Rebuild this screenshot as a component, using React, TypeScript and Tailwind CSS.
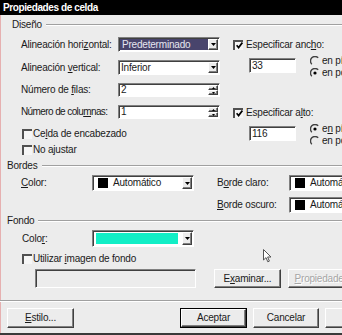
import React from "react";

const sunkenCls =
  "border border-t-[#808080] border-l-[#808080] border-b-[#ffffff] border-r-[#ffffff] shadow-[inset_1px_1px_0_0_#404040]";
const raisedCls =
  "border border-t-[#ffffff] border-l-[#ffffff] border-b-[#404040] border-r-[#404040] shadow-[inset_-1px_-1px_0_0_#808080]";

function U({ children }: { children: React.ReactNode }) {
  return <span className="underline decoration-1 underline-offset-[1px]">{children}</span>;
}

function Field({ className, children }: { className: string; children?: React.ReactNode }) {
  return <div className={`flex shrink-0 items-stretch p-[1px] ${sunkenCls} ${className}`}>{children}</div>;
}

function DropBtn() {
  return (
    <div className={`w-[10px] shrink-0 bg-[#ececec] ${raisedCls} flex items-center justify-center`}>
      <svg width="5" height="3" viewBox="0 0 5 3">
        <path d="M0 0H5L2.5 3Z" fill="#000" />
      </svg>
    </div>
  );
}

function SpinBtns() {
  return (
    <div className="w-[10px] shrink-0 flex flex-col">
      <div className={`flex-1 bg-[#ececec] ${raisedCls} flex items-center justify-center`}>
        <svg width="3" height="2" viewBox="0 0 3 2">
          <path d="M0 2H3L1.5 0Z" fill="#000" />
        </svg>
      </div>
      <div className={`flex-1 bg-[#ececec] ${raisedCls} flex items-center justify-center`}>
        <svg width="3" height="2" viewBox="0 0 3 2">
          <path d="M0 0H3L1.5 2Z" fill="#000" />
        </svg>
      </div>
    </div>
  );
}

function Check({ on }: { on?: boolean }) {
  return (
    <div className="w-[10px] h-[10px] shrink-0 border-t-2 border-l-2 border-t-[#505050] border-l-[#505050] bg-[#f6f6f6] flex items-center justify-center">
      {on && (
        <svg width="7" height="7" viewBox="0 0 7 7">
          <path d="M0.6 3.2L2.6 5.6L6.4 0.6" stroke="#000" strokeWidth="1.7" fill="none" />
        </svg>
      )}
    </div>
  );
}

function Radio({ on }: { on?: boolean }) {
  return (
    <svg width="10" height="10" viewBox="0 0 10 10" className="shrink-0">
      <path d="M8.2 1.8A4.5 4.5 0 0 0 1.8 8.2" stroke="#404040" strokeWidth="1.4" fill="none" />
      {on && <circle cx="5" cy="5" r="1.6" fill="#000" />}
    </svg>
  );
}

function GroupHeader({ label, className }: { label: string; className: string }) {
  return (
    <div className={`h-[12px] shrink-0 flex items-center whitespace-nowrap ${className}`}>
      <span className="shrink-0">{label}</span>
      <div className="flex-1 ml-[4px] h-[2px] border-t border-t-[#a0a0a0] border-b border-b-white" />
    </div>
  );
}

function Btn({
  className,
  children,
  def,
  disabled,
}: {
  className: string;
  children?: React.ReactNode;
  def?: boolean;
  disabled?: boolean;
}) {
  const inner = (
    <div
      className={`flex-1 bg-[#ececec] ${raisedCls} flex items-center justify-center whitespace-nowrap ${
        disabled ? "text-[#a6a6a6] [text-shadow:1px_1px_0_#ffffff]" : ""
      }`}
    >
      {children}
    </div>
  );
  if (def) {
    return <div className={`shrink-0 flex border border-black ${className}`}>{inner}</div>;
  }
  return <div className={`shrink-0 flex ${className}`}>{inner}</div>;
}

function ColorSelect({ className }: { className: string }) {
  return (
    <Field className={`bg-white ${className}`}>
      <div className="flex-1 flex items-center overflow-hidden whitespace-nowrap">
        <div className="w-[10px] h-[10px] bg-black ml-[4px] shrink-0" />
        <span className="ml-[5px] shrink-0">Automático</span>
      </div>
      <DropBtn />
    </Field>
  );
}

function Label({ className, children }: { className: string; children: React.ReactNode }) {
  return <span className={`shrink-0 whitespace-nowrap ${className}`}>{children}</span>;
}

function RadioRow({ on, children }: { on?: boolean; children: React.ReactNode }) {
  return (
    <div className="h-[12px] flex items-center gap-[2px] whitespace-nowrap">
      <Radio on={on} />
      <span className="shrink-0">{children}</span>
    </div>
  );
}

export default function App() {
  return (
    <div className="relative w-[342px] h-[335px] overflow-hidden bg-[#ececec] text-[10px] tracking-[-0.2px] leading-none text-[#1a1a1a] font-['Liberation_Sans',Arial,sans-serif] flex flex-col">
      <div className="h-[15px] shrink-0 bg-black text-white font-bold text-[10px] tracking-[-0.4px] pl-[3px] flex items-center whitespace-nowrap">
        Propiedades de celda
      </div>

      <div className="flex-1 flex flex-col shadow-[inset_1px_0_0_0_#e6b0b0]">
        {/* Diseño */}
        <GroupHeader label="Diseño" className="mt-[4px] pl-[12px]" />
        <div className="flex h-[125px] shrink-0">
          <div className="w-[232px] shrink-0 pl-[21px] flex flex-col">
            <div className="mt-[6px] h-[15px] flex items-center">
              <Label className="w-[97px]">
                Alineación hori<U>z</U>ontal:
              </Label>
              <Field className="w-[102px] h-[15px] bg-white">
                <div className="flex-1 bg-[#48446c] text-[#e6e6f0] flex items-center pl-[2px] whitespace-nowrap">
                  Predeterminado
                </div>
                <DropBtn />
              </Field>
            </div>
            <div className="mt-[8px] h-[15px] flex items-center">
              <Label className="w-[97px]">
                Alineación <U>v</U>ertical:
              </Label>
              <Field className="w-[102px] h-[15px] bg-white">
                <div className="flex-1 flex items-center pl-[1px] whitespace-nowrap">Inferior</div>
                <DropBtn />
              </Field>
            </div>
            <div className="mt-[8px] h-[14px] flex items-center">
              <Label className="w-[97px]">
                Número de <U>f</U>ilas:
              </Label>
              <Field className="w-[102px] h-[14px] bg-white">
                <div className="flex-1 flex items-center pl-[1px]">2</div>
                <SpinBtns />
              </Field>
            </div>
            <div className="mt-[8px] h-[14px] flex items-center">
              <Label className="w-[97px] tracking-[-0.6px]">
                Número de colu<U>m</U>nas:
              </Label>
              <Field className="w-[102px] h-[14px] bg-white">
                <div className="flex-1 flex items-center pl-[1px]">1</div>
                <SpinBtns />
              </Field>
            </div>
            <div className="mt-[8px] h-[13px] flex items-center gap-[1px] pl-[1px]">
              <Check />
              <Label className="">
                Ce<U>l</U>da de encabezado
              </Label>
            </div>
            <div className="mt-[3px] h-[13px] flex items-center gap-[1px] pl-[1px]">
              <Check />
              <Label className="">
                No a<U>j</U>ustar
              </Label>
            </div>
          </div>

          <div className="w-[110px] shrink-0 flex flex-col">
            <div className="mt-[7px] h-[13px] flex items-center gap-[3px] pl-[1px]">
              <Check on />
              <Label className="">
                Especificar anc<U>h</U>o:
              </Label>
            </div>
            <div className="mt-[4px] h-[24px] flex">
              <Field className="ml-[17px] mt-[3px] w-[47px] h-[15px] bg-white">
                <div className="flex-1 flex items-center pl-[1px]">33</div>
              </Field>
              <div className="ml-[14px] shrink-0 flex flex-col">
                <RadioRow>en píxeles</RadioRow>
                <RadioRow on>en porcentaje</RadioRow>
              </div>
            </div>
            <div className="mt-[27px] h-[13px] flex items-center gap-[3px] pl-[1px]">
              <Check on />
              <Label className="">
                Especificar a<U>l</U>to:
              </Label>
            </div>
            <div className="mt-[4px] h-[24px] flex">
              <Field className="ml-[17px] mt-[3px] w-[47px] h-[15px] bg-white">
                <div className="flex-1 flex items-center pl-[1px]">116</div>
              </Field>
              <div className="ml-[14px] shrink-0 flex flex-col">
                <RadioRow on>
                  e<U>n</U> píxeles
                </RadioRow>
                <RadioRow>en porcentaje</RadioRow>
              </div>
            </div>
          </div>
        </div>

        {/* Bordes */}
        <GroupHeader label="Bordes" className="mt-[4px] pl-[7px]" />
        <div className="mt-[3px] h-[16px] shrink-0 flex items-center pl-[21px]">
          <Label className="w-[71px]">
            <U>C</U>olor:
          </Label>
          <ColorSelect className="w-[102px] h-[16px]" />
          <Label className="ml-[23px] w-[72px]">
            B<U>o</U>rde claro:
          </Label>
          <ColorSelect className="w-[80px] h-[16px]" />
        </div>
        <div className="mt-[6px] h-[16px] shrink-0 flex items-center pl-[217px]">
          <Label className="w-[72px]">
            <U>B</U>orde oscuro:
          </Label>
          <ColorSelect className="w-[80px] h-[16px]" />
        </div>

        {/* Fondo */}
        <GroupHeader label="Fondo" className="mt-[2px] pl-[7px]" />
        <div className="mt-[3px] h-[17px] shrink-0 flex items-center pl-[22px]">
          <Label className="w-[70px]">
            Colo<U>r</U>:
          </Label>
          <Field className="w-[102px] h-[17px] bg-white">
            <div className="flex-1 flex items-center">
              <div className="ml-[2px] w-[82px] h-[11px] bg-[#12eec6]" />
            </div>
            <DropBtn />
          </Field>
        </div>
        <div className="mt-[5px] h-[13px] shrink-0 flex items-center gap-[1px] pl-[22px]">
          <Check />
          <Label className="">
            Utilizar <U>i</U>magen de fondo
          </Label>
        </div>
        <div className="mt-[4px] h-[19px] shrink-0 flex">
          <Field className="ml-[35px] w-[161px] h-[19px] bg-[#ececec]" />
          <Btn className="ml-[18px] w-[67px] h-[19px]">
            E<U>x</U>aminar...
          </Btn>
          <Btn className="ml-[7px] w-[67px] h-[19px]" disabled>
            <U>P</U>ropiedades
          </Btn>
        </div>

        <div className="mt-[12px] h-[2px] shrink-0 border-t border-t-[#a0a0a0] border-b border-b-white" />

        <div className="mt-[6px] h-[20px] shrink-0 flex">
          <Btn className="ml-[7px] w-[67px] h-[20px]">
            <U>E</U>stilo...
          </Btn>
          <Btn className="ml-[106px] w-[67px] h-[20px]" def>
            Aceptar
          </Btn>
          <Btn className="ml-[6px] w-[66px] h-[20px]">Cancelar</Btn>
          <Btn className="ml-[6px] w-[67px] h-[20px]">Ayuda</Btn>
        </div>
        <div className="flex-1" />
        <div className="h-[2px] shrink-0 bg-[#3a3a3a]" />
      </div>

      {/* mouse cursor */}
      <svg
        className="absolute left-[263px] top-[249px]"
        width="9"
        height="14"
        viewBox="0 0 9 14"
      >
        <path
          d="M0.5 0.5V11L3 8.6L4.8 12.8L6.4 12.1L4.6 8H8Z"
          fill="#ffffff"
          stroke="#555555"
          strokeWidth="1"
          strokeLinejoin="round"
        />
      </svg>
    </div>
  );
}
